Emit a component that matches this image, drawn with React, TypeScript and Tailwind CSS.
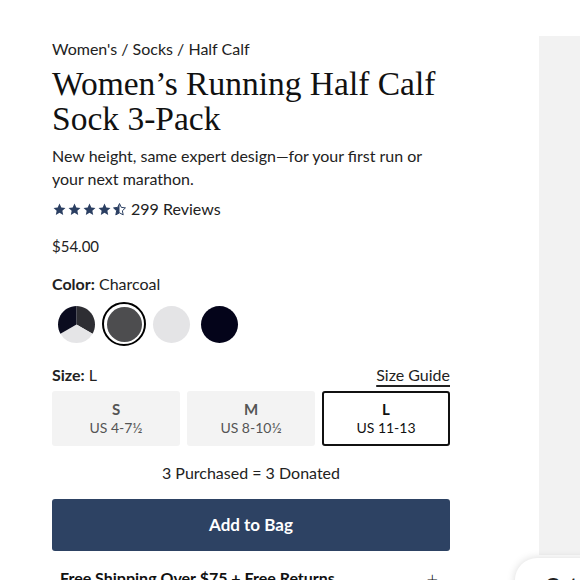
import React from "react";

const STAR = "M12 2.5l2.9 6.1 6.6.8-4.9 4.6 1.3 6.6L12 17.3l-5.9 3.3 1.3-6.6-4.9-4.6 6.6-.8z";

function Star({ half }: { half?: boolean }) {
  return (
    <svg width="15" height="15" viewBox="0 0 24 24">
      {half ? (
        <>
          <defs>
            <clipPath id="lh">
              <rect x="0" y="0" width="12" height="24" />
            </clipPath>
          </defs>
          <path d={STAR} fill="none" stroke="#2b3f62" strokeWidth="1.6" strokeLinejoin="round" />
          <path d={STAR} fill="#2b3f62" clipPath="url(#lh)" />
        </>
      ) : (
        <path d={STAR} fill="#2b3f62" />
      )}
    </svg>
  );
}

function pt(a: number, r = 18) {
  const rad = (a * Math.PI) / 180;
  return `${18 + r * Math.cos(rad)} ${18 + r * Math.sin(rad)}`;
}

function MultiSwatch() {
  const sector = (a1: number, a2: number, fill: string) => (
    <path d={`M18 18 L${pt(a1)} A18 18 0 0 1 ${pt(a2)} Z`} fill={fill} />
  );
  return (
    <svg width="37" height="37" viewBox="0 0 36 36">
      {sector(-90, 30, "#2e2e33")}
      {sector(30, 150, "#e5e5e7")}
      {sector(150, 270, "#0b0c1f")}
    </svg>
  );
}

export default function App() {
  const sans = { fontFamily: "Lato, 'Open Sans', sans-serif" };
  return (
    <div className="relative w-[580px] h-[580px] overflow-hidden bg-white text-[#1a1a1a]" style={sans}>
      <div className="flex">
        <div className="ml-[52px] w-[398px] flex flex-col">
          <div className="mt-[39px] text-[16px] leading-[20px] text-[#222]">Women's / Socks / Half Calf</div>
          <h1
            className="mt-[7px] text-[33.5px] leading-[35px] text-[#111]"
            style={{ fontFamily: "'Liberation Serif', 'DejaVu Serif', serif" }}
          >
            Women’s Running Half Calf Sock 3-Pack
          </h1>
          <p className="mt-[8px] text-[16px] leading-[23px] text-[#222]">
            New height, same expert design—for your first run or your next marathon.
          </p>
          <div className="mt-[8px] flex items-center h-[22px]">
            <div className="flex">
              <Star />
              <Star />
              <Star />
              <Star />
              <Star half />
            </div>
            <span className="ml-[4px] text-[16px] text-[#222]">299 Reviews</span>
          </div>
          <div className="mt-[16px] text-[15px] leading-[20px] text-[#222]">$54.00</div>
          <div className="mt-[18px] text-[16px] leading-[20px] text-[#222]">
            <span className="font-bold">Color:</span> Charcoal
          </div>
          <div className="mt-[8px] flex items-center h-[44px]">
            <div className="w-[44px] flex justify-center ml-[2px]">
              <MultiSwatch />
            </div>
            <div className="ml-[4px] w-[44px] h-[44px] rounded-full border-2 border-black flex items-center justify-center">
              <div className="w-[35px] h-[35px] rounded-full bg-[#4d4d4f]" />
            </div>
            <div className="ml-[7px] w-[37px] h-[37px] rounded-full bg-[#e4e4e6]" />
            <div className="ml-[11px] w-[37px] h-[37px] rounded-full bg-[#04041a]" />
          </div>
          <div className="mt-[19px] flex justify-between items-center text-[16px] leading-[20px] text-[#222]">
            <div>
              <span className="font-bold">Size:</span> L
            </div>
            <span className="underline underline-offset-[4px] decoration-[1.5px]">Size Guide</span>
          </div>
          <div className="mt-[6px] grid grid-cols-3 gap-[7px] h-[55px]">
            <div className="rounded-[3px] bg-[#f3f3f3] flex flex-col items-center justify-center text-[#555]">
              <span className="font-bold text-[15px] leading-[18px]">S</span>
              <span className="text-[14px] leading-[18px] mt-[1px]">US 4-7½</span>
            </div>
            <div className="rounded-[3px] bg-[#f3f3f3] flex flex-col items-center justify-center text-[#555]">
              <span className="font-bold text-[15px] leading-[18px]">M</span>
              <span className="text-[14px] leading-[18px] mt-[1px]">US 8-10½</span>
            </div>
            <div className="rounded-[3px] bg-white border-2 border-[#111] flex flex-col items-center justify-center text-[#111]">
              <span className="font-bold text-[15px] leading-[18px]">L</span>
              <span className="text-[14px] leading-[18px] mt-[1px]">US 11-13</span>
            </div>
          </div>
          <div className="mt-[16px] text-center text-[16px] leading-[22px] text-[#222]">3 Purchased = 3 Donated</div>
          <button className="mt-[15px] h-[52px] rounded-[3px] bg-[#2d4263] text-white font-bold text-[17px]">
            Add to Bag
          </button>
          <div className="mt-[17px] pl-[8px] pr-[12px] flex justify-between items-center text-[16px] leading-[20px] text-[#111]">
            <span className="font-bold">Free Shipping Over $75 + Free Returns</span>
            <span className="text-[20px] font-light">+</span>
          </div>
        </div>
        <div className="ml-[89px] mt-[36px] flex-1 h-[519px] bg-[#f2f2f2]" />
      </div>
      <div className="absolute left-[515px] top-[558px] w-[200px] h-[50px] rounded-[22px] bg-white shadow-[0_0_8px_rgba(0,0,0,0.15)] pl-[30px] pt-[12px] text-[20px] font-bold text-[#222]">
        Get $20 Off
      </div>
    </div>
  );
}
